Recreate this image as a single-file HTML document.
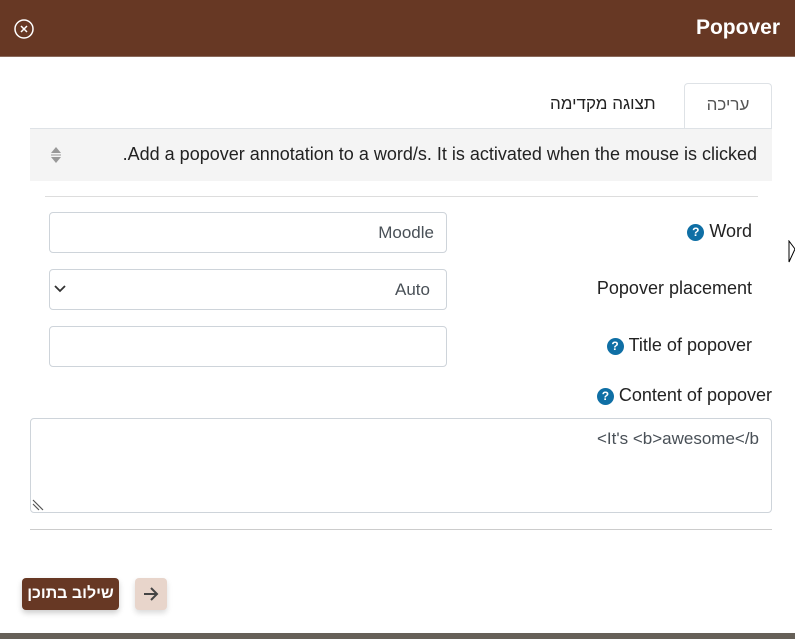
<!DOCTYPE html><html><head><meta charset="utf-8"><style>
*{box-sizing:border-box;margin:0;padding:0}
body{width:795px;height:639px;position:relative;background:#fff;font-family:"Liberation Sans","Noto Sans CJK SC",sans-serif;overflow:hidden;color:#333}
.a{position:absolute}
.hdr{left:0;top:0;width:795px;height:57px;background:#673824;border-bottom:1px solid #8a6a5c}
.inp{border:1px solid #ced4da;border-radius:4px;background:#fff;height:41px;left:49px;width:398px;font-size:17px;color:#495057;text-align:right;padding:10px 12px;line-height:20px}
.lbl{font-size:18px;color:#222;text-align:right;right:43px;white-space:nowrap}
.q{display:inline-block;width:17px;height:17px;border-radius:50%;background:#0f6fa5;color:#fff;font-size:12px;font-weight:bold;text-align:center;line-height:17px;vertical-align:1px;margin-right:5px}
</style></head><body>
<div class="a hdr"></div>
<svg class="a" style="left:13px;top:18px" width="22" height="22" viewBox="0 0 22 22"><circle cx="11" cy="11" r="9" fill="none" stroke="#fff" stroke-width="1.5"/><path d="M8 8l6 6M14 8l-6 6" stroke="#fff" stroke-width="1.5"/></svg>
<div class="a" style="right:15px;top:16px;color:#fff;font-size:21px;font-weight:bold">Popover</div>
<div class="a" style="left:684px;top:83px;width:88px;height:46px;border:1px solid #dee2e6;border-bottom:none;border-radius:4px 4px 0 0;background:#fff;font-size:17px;color:#555;text-align:center;line-height:42px">עריכה</div>
<div class="a" style="left:550px;top:94px;font-size:17px;color:#222">תצוגה מקדימה</div>
<div class="a" style="left:30px;top:128px;width:742px;height:53px;background:#f4f4f4;border-top:1px solid #dee2e6"></div>
<div class="a" style="right:38px;top:144px;font-size:18px;color:#222;white-space:nowrap">.Add a popover annotation to a word/s. It is activated when the mouse is clicked</div>
<svg class="a" style="left:49px;top:145px" width="14" height="20"><path d="M2 8L7 2L12 8Z" fill="#999"/><path d="M2 12L7 18L12 12Z" fill="#999"/><path d="M2 10h10" stroke="#999"/></svg>
<div class="a" style="left:45px;top:196px;width:713px;height:1px;background:#ddd"></div>
<div class="a lbl" style="top:221px"><span class="q">?</span>Word</div>
<div class="a lbl" style="top:278px">Popover placement</div>
<div class="a lbl" style="top:335px"><span class="q">?</span>Title of popover</div>
<div class="a lbl" style="top:385px;right:23px"><span class="q">?</span>Content of popover</div>
<div class="a inp" style="top:212px">Moodle</div>
<div class="a inp" style="top:269px;padding-right:16px">Auto</div>
<svg class="a" style="left:54px;top:285px" width="12" height="8"><path d="M1 1l5 5 5-5" stroke="#333" stroke-width="1.8" fill="none"/></svg>
<div class="a inp" style="top:326px"></div>
<div class="a inp" style="left:30px;top:418px;width:742px;height:95px;padding:10px 12px">&lt;It's &lt;b&gt;awesome&lt;/b</div>
<svg class="a" style="left:32px;top:499px" width="12" height="12"><path d="M1 1l10 10M1 5l6 6" stroke="#555" stroke-width="1.2"/></svg>
<div class="a" style="left:30px;top:529px;width:742px;height:1px;background:#ccc"></div>
<div class="a" style="left:22px;top:578px;width:97px;height:32px;background:#673824;border-radius:4px;color:#fff;font-size:16px;font-weight:bold;text-align:center;line-height:31px;box-shadow:0 3px 6px rgba(0,0,0,.2)">שילוב בתוכן</div>
<div class="a" style="left:135px;top:578px;width:32px;height:32px;background:#e8d5cb;border-radius:4px;box-shadow:0 3px 6px rgba(0,0,0,.15)"></div>
<svg class="a" style="left:143px;top:587px" width="16" height="14"><path d="M1 7h13M8 1l6 6-6 6" stroke="#444" stroke-width="2" fill="none"/></svg>
<svg class="a" style="left:788px;top:240px" width="8" height="24"><path d="M1 1L7 9L1 22Z" fill="#fff" stroke="#000"/></svg>
<div class="a" style="left:0;top:633px;width:795px;height:6px;background:#666058"></div>
</body></html>
